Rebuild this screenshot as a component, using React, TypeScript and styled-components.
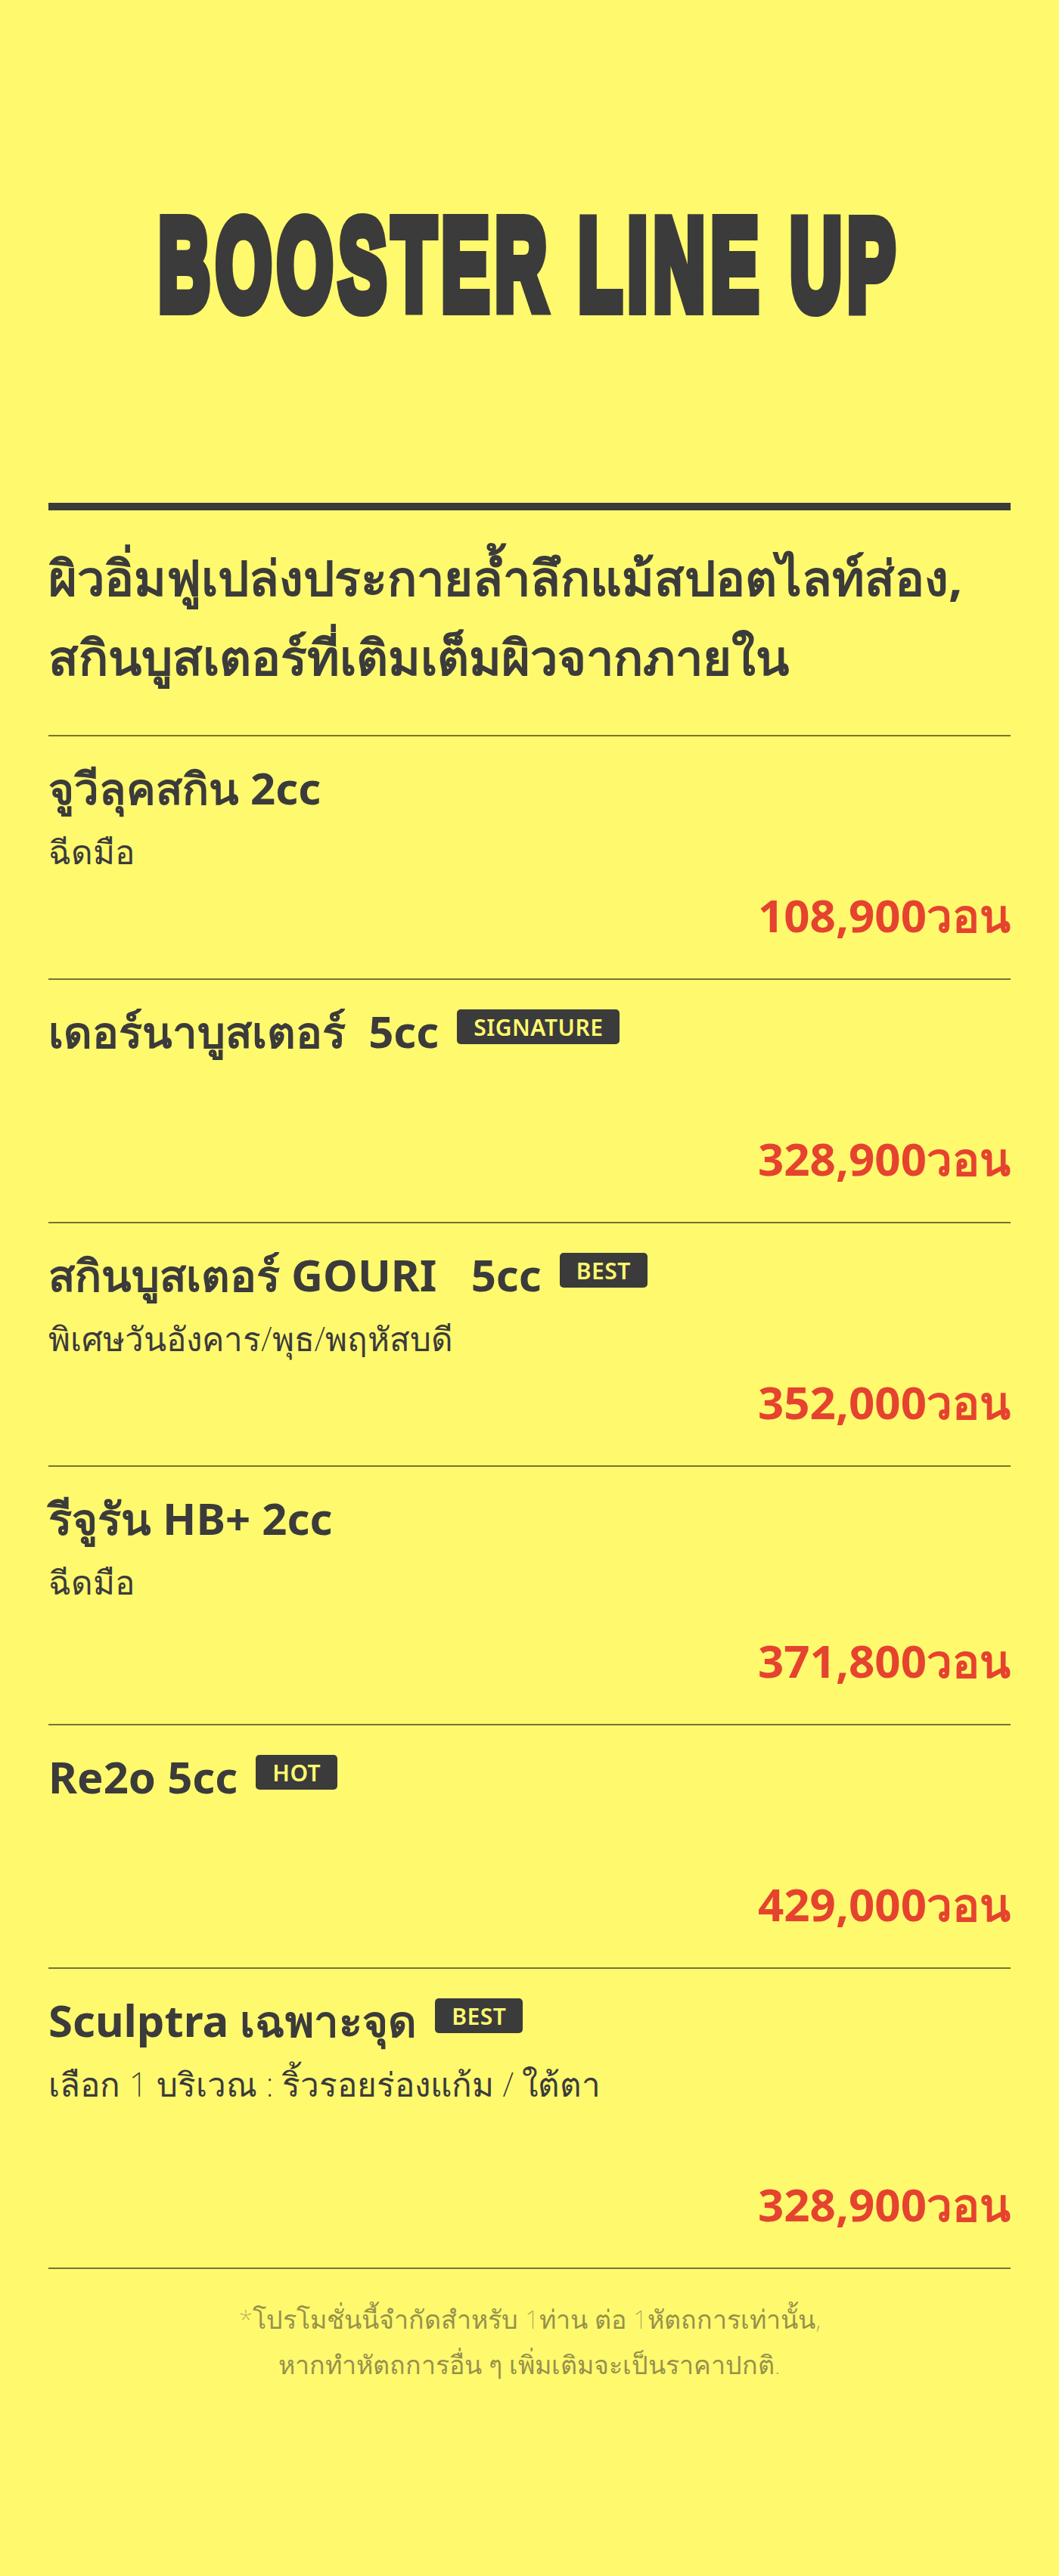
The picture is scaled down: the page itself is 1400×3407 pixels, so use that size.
import React from "react";
import styled, { createGlobalStyle } from "styled-components";

const GlobalStyle = createGlobalStyle`
  html, body {
    margin: 0;
    padding: 0;
    background: #fff96e;
  }
  body {
    font-family: "Noto Sans", "Open Sans", sans-serif;
    color: #3b3b3b;
  }
`;

const Page = styled.main`
  box-sizing: border-box;
  min-height: 3407px;
  padding: 0 64px;
  background: #fff96e;
`;

const Hero = styled.header`
  display: flex;
  justify-content: center;
  padding-top: 265px;
  height: 400px;
`;

const BigTitle = styled.h1`
  margin: 0;
  flex: none;
  font-family: "Liberation Sans", Arial, sans-serif;
  font-weight: 700;
  font-size: 170px;
  line-height: 170px;
  height: 170px;
  letter-spacing: 14px;
  color: #3b3b3b;
  -webkit-text-stroke: 16px #3b3b3b;
  paint-order: stroke fill;
  transform: scaleX(0.555);
  transform-origin: center;
  white-space: nowrap;
`;

const ThickRule = styled.hr`
  margin: 0;
  border: 0;
  height: 10px;
  background: #3b3b3b;
`;

const Intro = styled.h2`
  margin: 36px 0 51px;
  font-size: 65px;
  line-height: 105px;
  font-weight: 700;
  color: #3b3b3b;
`;

const List = styled.ul`
  list-style: none;
  margin: 0;
  padding: 0;
`;

const Item = styled.li`
  border-top: 2px solid #777332;
  padding: 28px 0 44px;
  display: flex;
  flex-direction: column;

  &:last-child {
    border-bottom: 2px solid #777332;
  }
`;

const TitleRow = styled.div`
  display: flex;
  align-items: flex-start;
  gap: 24px;
`;

const Title = styled.h3`
  margin: 0;
  font-size: 58px;
  line-height: 80px;
  font-weight: 700;
  color: #3b3b3b;
  white-space: pre;
`;

const Badge = styled.span`
  margin-top: 11px;
  display: inline-flex;
  align-items: center;
  height: 46px;
  padding: 0 22px;
  border-radius: 5px;
  background: #3b3b3b;
  color: #fff96e;
  font-size: 30px;
  font-weight: 600;
  letter-spacing: 0.5px;
`;

const Desc = styled.p`
  margin: 4px 0 0;
  min-height: 80px;
  font-size: 44px;
  line-height: 80px;
  font-weight: 200;
  color: #3b3b3b;
`;

const Price = styled.p<{ $extra: number }>`
  margin: ${(p) => 4 + p.$extra}px 0 0;
  text-align: right;
  font-size: 60px;
  line-height: 80px;
  font-weight: 700;
  color: #e5432f;
`;

const Note = styled.p`
  margin: 36px 0 0;
  text-align: center;
  font-size: 34px;
  line-height: 60px;
  font-weight: 100;
  color: #96914c;
`;

type Product = {
  title: string;
  badge?: string;
  desc?: string;
  price: string;
  extra?: number;
};

const products: Product[] = [
  { title: "จูวีลุคสกิน 2cc", desc: "ฉีดมือ", price: "108,900วอน" },
  { title: "เดอร์นาบูสเตอร์  5cc", badge: "SIGNATURE", price: "328,900วอน" },
  {
    title: "สกินบูสเตอร์ GOURI   5cc",
    badge: "BEST",
    desc: "พิเศษวันอังคาร/พุธ/พฤหัสบดี",
    price: "352,000วอน",
  },
  { title: "รีจูรัน HB+ 2cc", desc: "ฉีดมือ", price: "371,800วอน", extra: 20 },
  { title: "Re2o 5cc", badge: "HOT", price: "429,000วอน" },
  {
    title: "Sculptra เฉพาะจุด",
    badge: "BEST",
    desc: "เลือก 1 บริเวณ : ริ้วรอยร่องแก้ม / ใต้ตา",
    price: "328,900วอน",
    extra: 75,
  },
];

export default function App() {
  return (
    <>
      <GlobalStyle />
      <Page>
        <Hero>
          <BigTitle>BOOSTER LINE UP</BigTitle>
        </Hero>
        <ThickRule />
        <Intro>
          ผิวอิ่มฟูเปล่งประกายล้ำลึกแม้สปอตไลท์ส่อง,
          <br />
          สกินบูสเตอร์ที่เติมเต็มผิวจากภายใน
        </Intro>
        <List>
          {products.map((p) => (
            <Item key={p.title}>
              <TitleRow>
                <Title>{p.title}</Title>
                {p.badge && <Badge>{p.badge}</Badge>}
              </TitleRow>
              <Desc>{p.desc ?? "\u00a0"}</Desc>
              <Price $extra={p.extra ?? 0}>{p.price}</Price>
            </Item>
          ))}
        </List>
        <Note>
          *โปรโมชั่นนี้จำกัดสำหรับ 1ท่าน ต่อ 1หัตถการเท่านั้น,
          <br />
          หากทำหัตถการอื่น ๆ เพิ่มเติมจะเป็นราคาปกติ.
        </Note>
      </Page>
    </>
  );
}
